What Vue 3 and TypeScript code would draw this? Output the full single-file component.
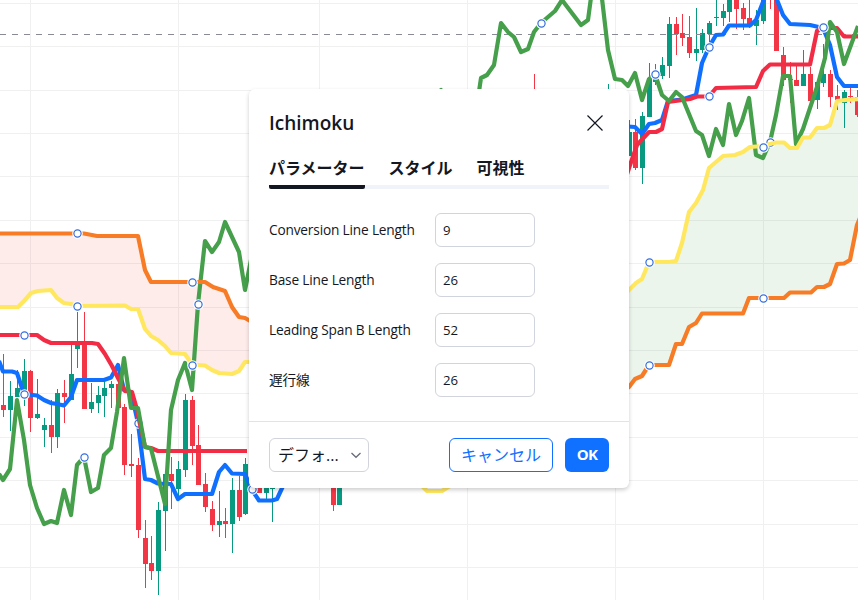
<script setup lang="ts">
import { ref } from 'vue'

interface Candle { x: number; high: number; low: number; top: number; bottom: number; up: boolean }
interface Field { label: string; value: string }

const verticals = [30.5, 178.5, 319.5, 467.5, 615.5, 763.5]
const horizontals = [3.5, 46.5, 90.5, 133.5, 176.5, 220.5, 263.5, 307.5, 350.5, 393.5, 437.5, 480.5, 524.5, 567.5]

// x, high, low, body top, body bottom, 1 = rising
const rows: number[][] = [
  [3.5, 354, 417, 405, 410, 0], [10.5, 381, 431, 396, 410, 1], [17.5, 370, 397, 388, 397, 1],
  [24.5, 359, 406, 371, 397, 1], [30.5, 370, 432, 371, 418, 0], [37.5, 379, 419, 414, 418, 1],
  [44.5, 418, 447, 425, 430, 1], [51.5, 400, 453, 425, 437, 0], [57.5, 389, 448, 393, 437, 1],
  [64.5, 380, 423, 393, 397, 0], [71.5, 344, 400, 374, 400, 1], [77.5, 312, 368, 345, 349, 1],
  [84.5, 312, 409, 343, 409, 0], [91.5, 383, 413, 402, 409, 1], [98.5, 386, 413, 395, 403, 1],
  [104.5, 380, 417, 388, 396, 1], [111.5, 381, 408, 384, 388, 1], [118.5, 373, 408, 384, 408, 0],
  [124.5, 404, 475, 407, 465, 0], [131.5, 434, 477, 464, 466, 0], [138.5, 458, 538, 465, 530, 0],
  [145.5, 520, 588, 538, 564, 0], [151.5, 536, 580, 563, 571, 0], [158.5, 502, 595, 510, 571, 1],
  [165.5, 474, 551, 474, 511, 1], [171.5, 457, 509, 474, 481, 0], [178.5, 461, 496, 469, 489, 1],
  [185.5, 394, 477, 400, 470, 1], [192.5, 396, 465, 400, 446, 0], [198.5, 425, 485, 445, 485, 0],
  [205.5, 473, 512, 484, 507, 0], [212.5, 501, 531, 509, 525, 0], [219.5, 491, 537, 521, 525, 1],
  [225.5, 508, 538, 521, 524, 0], [232.5, 478, 553, 490, 524, 1], [239.5, 476, 521, 490, 517, 0],
  [245.5, 458, 515, 464, 514, 1], [259.5, 470, 493, 474, 493, 0], [266.5, 470, 499, 474, 493, 1],
  [272.5, 470, 522, 474, 489, 1], [333.5, 470, 511, 474, 505, 0], [339.5, 470, 505, 474, 505, 1],
  [534.5, 74, 120, 100, 120, 0], [608.5, 84, 120, 100, 120, 1], [629.5, 120, 156, 132, 156, 1],
  [635.5, 119, 170, 132, 168, 0], [642.5, 112, 184, 116, 168, 1], [649.5, 63, 117, 78, 117, 1],
  [655.5, 64, 85, 76, 82, 1], [662.5, 57, 79, 65, 76, 1], [669.5, 17, 78, 24, 66, 1],
  [676.5, 17, 55, 24, 34, 0], [682.5, 14, 46, 33, 38, 0], [689.5, 16, 58, 37, 53, 0],
  [696.5, 8, 61, 49, 53, 1], [702.5, 29, 53, 33, 50, 1], [709.5, 21, 42, 23, 34, 1],
  [716.5, -5, 26, 17, 18, 1], [723.5, 4, 26, 11, 18, 1], [729.5, -5, 22, -4, 12, 1],
  [736.5, -5, 29, -4, 9, 0], [743.5, 3, 30, 8, 19, 0], [749.5, -5, 28, 18, 25, 0],
  [756.5, 10, 45, 20, 26, 1], [763.5, -5, 24, -4, 21, 1], [770.5, -5, 9, -4, -2, 0],
  [776.5, -5, 51, -4, 51, 0], [783.5, 47, 86, 55, 80, 0], [790.5, 62, 103, 79, 80, 0],
  [796.5, 65, 86, 80, 86, 0], [803.5, 50, 86, 74, 86, 1], [810.5, 67, 101, 74, 101, 0],
  [817.5, 80, 109, 82, 100, 1], [823.5, 44, 87, 74, 83, 1], [830.5, 70, 107, 74, 97, 0],
  [837.5, 85, 110, 96, 100, 0], [844.5, 90, 128, 92, 103, 1], [850.5, 87, 103, 96, 97, 0],
  [857.5, 90, 117, 97, 115, 0],
]
const candles: Candle[] = rows.map(([x, high, low, top, bottom, up]) => ({ x, high, low, top, bottom, up: up === 1 }))

const spanA = {
  left: '0,307 18,307 24,301 31,293 38,291 51,290 57,298 64,303 71,304 77,306 125,305.5 131,309 138,309 145,329 151,336 158,340 165,346 171,353 185,354 192,364.5 205,365.5 212,370 219,373 232,374 239,371 245,362 252,362',
  right: '622,297 630,289 636,283 642,279 649,262 669,262 676,261 682,243 689,212 696,203 703,190 709,168 716,162 723,156 735,155 743,152 750,147 763,146 770,144 776,142.5 784,142.5 790,148 797,148 803,137.5 810,137.5 817,128 824,128 830,125 837,101 845,100 860,99',
}
const spanB = {
  left: '0,233.5 84,233.5 97,236 138,236 145,270 151,282 205,282 213,287 225,291 232,307 239,317 245,318 252,322',
  right: '622,393 629,387 635,379 642,376 649,365 669,365 676,344 682,344 689,327 696,323 702,313.5 743,313.5 749,298 784,298 790,292.5 811,292.5 817,287 824,287 830,284 837,264 844,263.5 850,260 857,225 860,218',
}
const reversed = (points: string) => points.split(' ').reverse().join(' ')
const clouds = [
  { points: `${spanB.left} ${reversed(spanA.left)}`, kind: 'bear' },
  { points: `${spanA.right} ${reversed(spanB.right)}`, kind: 'bull' },
]

const conversion = [
  '-1,361 3,371.5 12,371.5 17,373 24,394 37,395.5 44,400 51,403 57,404 64,405.5 71,397 77,380 104,380 111,377.5 118,365 124,390 131,392 138,423 145,479 151,480 158,483.5 171,484 178,499 185,494 212,494 219,472 225,465 232,473.5 245,474 252,490 259,500.5 272,500.5 277,499 283,486',
  '620,126 635,127 642,134 649,124 655,123 662,120 668,101 682,99.5 696,95 702,63 709,47 716,35 723,34.5 729,25.5 750,25.5 756,20 763,2 765,-5',
  '775,-5 783,15 790,24 810,25 823,28 830,45 837,77 844,86 860,86',
]
const base = [
  '0,335 37,335 44,340 51,343 92,343 98,344 105,354 112,366 118,378 125,391 132,392 136,406 145,447 151,448 158,451 247,451',
  '622,190 629,168 637,145 649,132 656,132 662,129 668,102 690,99 697,96.5 709,96.5 716,88 756,87 763,71 770,64.5 810,64.5 817,31 823,28 837,28 844,36.5 860,36.5',
]
const lagging = [
  '-1,474 3,480 10,469 17,400 24,440 30,485 37,508 44,524 51,521 57,523 64,490 71,515 77,465 84,457 91,492 98,488 104,455 111,448 117,412 124,358 131,408 138,408 145,447 151,448.5 165,504 171,410 178,380 185,363 192,390 198,304 205,241 212,252 219,242 225,222 239,252 245,290 252,255',
  '434,96 441,90 447,99',
  '477,105 481,78 487,75 494,65 501,23 508,32 514,37 521,52 528,49 534,32 541,23 555,11 562,0 581,25 588,20 592,-10 601,-10 608,50 615,79 622,80 628,86 635,73 642,100 649,79 655,74 662,95 669,101 676,92 682,97 689,114 696,131 702,135 709,156 716,129 723,145 729,104 736,135 742,121 749,98 756,155 763,158 770,142 776,115 783,76 790,76 796,144 803,129 818,84 825,58 830,22 837,32 844,64 858,26',
]
const layers = [
  { lines: conversion, kind: 'conversion', handles: [[138, 423]] },
  { lines: base, kind: 'base', handles: [] },
  { lines: lagging, kind: 'lagging', handles: [[770, 142]] },
  { lines: [spanA.left, spanA.right, '420,484 427,491 442,491 450,486'], kind: 'span-a', handles: [] },
  { lines: [spanB.left, spanB.right], kind: 'span-b', handles: [
    [77, 233], [77, 306], [24, 335], [24, 394], [84, 457], [192, 282], [198, 304], [192, 365], [252, 489],
    [541, 23], [655, 74], [709, 47], [709, 96], [763, 147], [823, 27], [649, 262], [649, 365], [763, 298],
  ] },
]

const tabs = ['パラメーター', 'スタイル', '可視性']
const activeTab = ref(0)
const fields = ref<Field[]>([
  { label: 'Conversion Line Length', value: '9' },
  { label: 'Base Line Length', value: '26' },
  { label: 'Leading Span B Length', value: '52' },
  { label: '遅行線', value: '26' },
])
</script>

<template>
  <main class="stage">
    <svg class="chart" width="858" height="600" viewBox="0 0 858 600">
      <g class="grid">
        <line v-for="x in verticals" :key="'v' + x" :x1="x" :x2="x" y1="0" y2="600" />
        <line v-for="y in horizontals" :key="'h' + y" :y1="y" :y2="y" x1="0" x2="858" />
      </g>
      <polygon v-for="c in clouds" :key="c.kind" :points="c.points" :class="c.kind" />
      <g v-for="c in candles" :key="c.x" :class="c.up ? 'up' : 'down'" shape-rendering="crispEdges">
        <rect :x="c.x - 0.5" :y="c.high" width="1" :height="c.low - c.high" />
        <rect :x="c.x - 2.5" :y="c.top" width="5" :height="c.bottom - c.top" />
      </g>
      <line class="price" x1="0" x2="858" y1="34.5" y2="34.5" />
      <g v-for="layer in layers" :key="layer.kind">
        <polyline v-for="(points, i) in layer.lines" :key="i" :points="points" :class="['line', layer.kind]" />
        <g v-for="h in layer.handles" :key="h.join()">
          <circle class="halo" :cx="h[0] + 0.5" :cy="h[1] + 0.5" r="5.3" />
          <circle class="ring" :cx="h[0] + 0.5" :cy="h[1] + 0.5" r="3.6" />
        </g>
      </g>
    </svg>

    <section class="dialog" role="dialog">
      <header class="head">
        <h1 class="title">Ichimoku</h1>
        <button class="close" type="button">
          <svg width="18" height="18" viewBox="0 0 18 18"><path d="M1.5 1.5l15 15m0-15l-15 15" /></svg>
        </button>
      </header>
      <nav class="tabs">
        <button
          v-for="(t, i) in tabs" :key="t" type="button"
          :class="['tab', { active: i === activeTab }]" @click="activeTab = i"
        >{{ t }}</button>
      </nav>
      <div class="fields">
        <label v-for="f in fields" :key="f.label" class="field">
          <span class="label">{{ f.label }}</span>
          <input v-model="f.value" class="input" type="text">
        </label>
      </div>
      <footer class="foot">
        <button class="select" type="button">
          <span>デフォ...</span>
          <svg width="12" height="8" viewBox="0 0 12 8"><path d="M1.5 2L6 6.300l4.500-4.300" /></svg>
        </button>
        <div class="actions">
          <button class="btn outline" type="button">キャンセル</button>
          <button class="btn solid" type="button">OK</button>
        </div>
      </footer>
    </section>
  </main>
</template>

<style>
body { margin: 0; overflow: hidden; }
</style>

<style scoped>
.stage {
  position: relative;
  width: 858px;
  height: 600px;
  overflow: hidden;
  background: #fff;
  color: #131722;
  font-family: "Open Sans", "Noto Sans CJK JP", sans-serif;
}
.chart { display: block; }
.grid line { stroke: #f0f0f1; stroke-width: 1; }
.bear { fill: rgba(244, 67, 54, 0.1); }
.bull { fill: rgba(67, 160, 71, 0.1); }
.up { fill: #089981; }
.down { fill: #f23645; }
.price { stroke: #888b94; stroke-width: 1; stroke-dasharray: 6 6; }
.line { fill: none; stroke-width: 4.2; stroke-linejoin: round; }
.conversion { stroke: #0f6fff; }
.base { stroke: #f22c45; }
.lagging { stroke: #459f4b; }
.span-a { stroke: #ffe860; }
.span-b { stroke: #f77c25; }
.halo { fill: #fff; }
.ring { fill: #fff; stroke: #346ee0; stroke-width: 1.2; }

.dialog {
  position: absolute;
  left: 249px;
  top: 89px;
  box-sizing: border-box;
  width: 380px;
  height: 399px;
  display: flex;
  flex-direction: column;
  border-radius: 6px;
  background: #fff;
  box-shadow: 0 2px 4px rgba(0, 0, 0, 0.2);
}
button { margin: 0; padding: 0; border: 0; background: none; color: inherit; font-family: inherit; }
.head {
  display: flex;
  align-items: center;
  justify-content: space-between;
  height: 68px;
  padding: 0 25px 0 20px;
}
.title { margin: 0; font-size: 19px; line-height: 28px; font-weight: 600; }
.close { display: flex; }
.close path { fill: none; stroke: #131722; stroke-width: 1.2; }
.tabs {
  display: flex;
  gap: 24px;
  height: 43px;
  margin: 0 20px;
  box-sizing: border-box;
  background: linear-gradient(#f0f3fa, #f0f3fa) 0 28px / 100% 4px no-repeat;
}
.tab { height: 32px; padding-bottom: 10px; box-sizing: border-box; font-size: 16px; line-height: 22px; font-weight: 700; white-space: nowrap; }
.active { background: linear-gradient(#131722, #131722) 0 28px / 100% 4px no-repeat; border-radius: 2px; }
.fields { display: flex; flex-direction: column; gap: 16px; padding: 13px 20px 0; }
.field { display: flex; align-items: center; height: 34px; }
.label { width: 166px; font-size: 13.7px; letter-spacing: -0.18px; line-height: 20px; white-space: nowrap; }
.input {
  box-sizing: border-box;
  width: 100px;
  height: 34px;
  padding: 0 7px;
  border: 1px solid #d1d4dc;
  border-radius: 6px;
  outline: none;
  color: inherit;
  font: 13.2px "Open Sans", sans-serif;
}
.foot {
  display: flex;
  align-items: center;
  justify-content: space-between;
  box-sizing: border-box;
  height: 67px;
  margin-top: auto;
  padding: 0 20px;
  border-top: 1px solid #e0e3eb;
}
.select {
  display: flex;
  align-items: center;
  justify-content: space-between;
  box-sizing: border-box;
  width: 100px;
  height: 34px;
  padding: 0 6px 2px 8px;
  border: 1px solid #d1d4dc;
  border-radius: 6px;
  font-size: 16px;
}
.select svg { margin-top: 2px; }
.select path { fill: none; stroke: #6a6d78; stroke-width: 1.3; }
.actions { display: flex; gap: 12px; }
.btn { box-sizing: border-box; height: 34px; padding-bottom: 2px; border-radius: 6px; font-size: 16px; }
.outline { width: 104px; border: 1px solid #1070ff; color: #1070ff; }
.solid { width: 44px; background: #1070ff; color: #fff; font-size: 15px; font-weight: 700; letter-spacing: -0.8px; }
</style>
